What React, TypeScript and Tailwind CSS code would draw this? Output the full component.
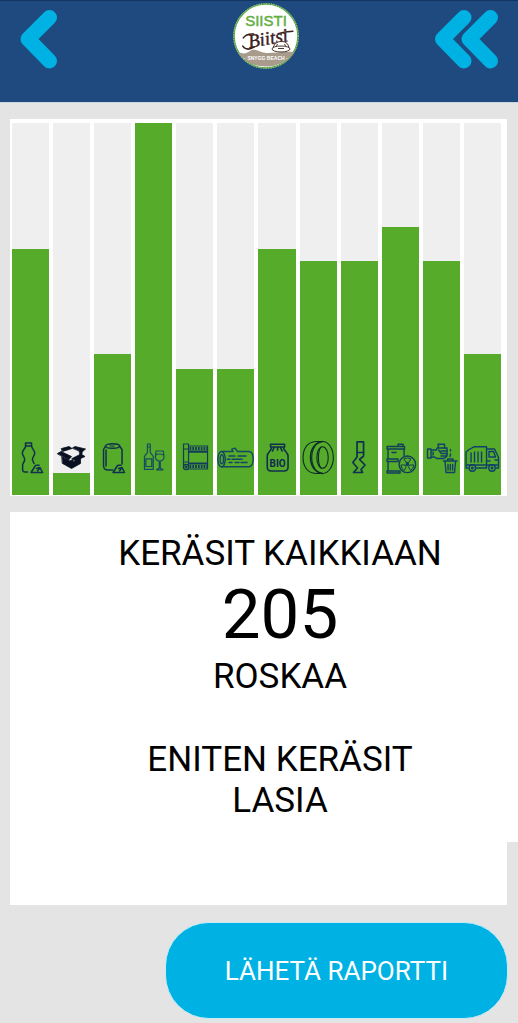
import type { ReactNode } from "react";

type Category = { name: string; level: number; icon: ReactNode };

const WarningTriangle = () => (
  <g>
    <path d="M23.5 25.5 L19 32.5 H30.5 M24.5 25.2 H27" strokeWidth="1.5" />
    <path d="M24.5 28.5 L28 27.5 L30 31.5 M28 27.5 L25.5 31" strokeWidth="1.5" />
  </g>
);

const categories: Category[] = [
  {
    name: "Muovi",
    level: 66,
    icon: (
      <g strokeWidth="1.5">
        <path d="M13.5 3 H19.5 V6 H13.5 Z" />
        <path d="M13.5 6.5 C13 9 10.5 10 10.3 13 C10.3 16 13.2 17 12.6 20 C12 23 10.6 23 10.6 25 V30 Q10.8 32 13 32 H15.5" />
        <path d="M19.7 6.5 C20 9 22.5 10 22.7 13 C22.7 16 20 17 20.4 20 L22 23.5" />
        <WarningTriangle />
      </g>
    ),
  },
  {
    name: "Pahvi",
    level: 6,
    icon: (
      <g fill="#070f20" stroke="#070f20" strokeWidth="0.8">
        <path d="M9 17 L17 21 L19.5 19.5 L20.5 22 L27.5 18 V23.5 L18.5 28.5 L9.5 23.5 Z" />
        <path d="M4.5 13.5 L8 11.5 L18.5 16.5 L15.5 20 Z" />
        <path d="M19 18.5 L28 14 L32 16.5 L22 21 Z" />
        <path d="M8.5 8.5 L16 6.5 L19 8.5 L9.5 11.5 Z" />
        <path d="M19.5 8 L22 6.5 L32.5 9 L29 12 Z" />
        <path d="M26.5 11 L29 11.5 V14 L27 14.5 Z" />
      </g>
    ),
  },
  {
    name: "Metalli",
    level: 38,
    icon: (
      <g strokeWidth="1.5">
        <ellipse cx="18.5" cy="6" rx="7" ry="2.3" />
        <path d="M11.5 6 L9.5 9.5 V26 Q9.8 30 14 30 H18.5 M25.5 6 L28 9.5 V24 M12 10 V26" />
        <path d="M16 6 H20" strokeWidth="1" />
        <WarningTriangle />
      </g>
    ),
  },
  {
    name: "Lasi",
    level: 100,
    icon: (
      <g stroke="#164b62" strokeWidth="1.2">
        <path d="M12.4 4 H15.2 V12 C15.2 14 18.2 14.5 18.2 17 V29.3 H9.4 V17 C9.4 14.5 12.4 14 12.4 12 Z M12.4 7 H15.2 M10.8 18.8 H16.7 V26.5 H10.8 Z" />
        <path d="M21 11 H28.3 L29 17 Q28.5 21 24.7 21 Q20.8 21 20.3 17 Z M20.7 15 Q24 13 28.7 15 M24.2 21 V28 L21.5 29.8 H28 L25.2 28 V21" />
      </g>
    ),
  },
  {
    name: "Filmi",
    level: 34,
    icon: (
      <g stroke="#123c5a" strokeWidth="1.2">
        <path d="M7.5 4 H12.5 V27 M7.5 4 V27 M7.5 9 H12.5 M8.5 22 H12" />
        <circle cx="10" cy="27" r="2.6" />
        <circle cx="10" cy="27" r="0.8" />
        <path d="M12.5 6 H31.5 V29 H12 M12.5 11 H31.5 M13 24 H31.5 M13 12.2 H31.5 V23 H13" />
        <path d="M13.5 8.5 H31 M13.5 26.5 H31" strokeWidth="3.2" strokeDasharray="1.8 1" strokeLinecap="butt" />
      </g>
    ),
  },
  {
    name: "Puu",
    level: 34,
    icon: (
      <g stroke="#144564" strokeWidth="1.4">
        <ellipse cx="4.5" cy="19.2" rx="3.7" ry="7.7" />
        <ellipse cx="4.8" cy="19.2" rx="1.7" ry="4.5" />
        <path d="M4.5 11.5 H16 L14.7 9.2 L18 8.2 L20.5 11.5 H32 C37.5 12 37.5 26 32 26.8 H4.5" />
        <path d="M12 16 H18 M21 16 H29 M10 19.3 H13 M15 19.3 H25 M12 22.5 H15 M18 22.5 H22 M24 22.5 H30" />
      </g>
    ),
  },
  {
    name: "Biojäte",
    level: 66,
    icon: (
      <g strokeWidth="1.6">
        <path d="M12.5 4.2 H26.5 V7 H12.5 Z M13.5 7.5 C13.5 11 9.2 12 9.2 16 V27 Q9.2 31 13 31 H26 Q30 31 30 27 V16 C30 12 25.5 11 25.5 7.5" />
        <path d="M16 7.5 L14.5 11 M19.5 7.5 V10 M22.5 7.5 L24 11" />
        <text x="19.6" y="26.6" textAnchor="middle" fontSize="10" fontWeight="700" fill="#10294f" stroke="none" className="font-[Roboto,sans-serif]">BIO</text>
      </g>
    ),
  },
  {
    name: "Renkaat",
    level: 63,
    icon: (
      <g stroke="#0d2a2b" strokeWidth="1.1">
        <ellipse cx="22.5" cy="17.5" rx="10.8" ry="16" />
        <ellipse cx="22.5" cy="17.5" rx="5.7" ry="10.8" />
        <path d="M22.5 1.5 H16 C7 2 3 9 3 17.5 C3 26 7 33 16 33.5 H22.5" />
        <path d="M22.5 1.5 C14 3 10.5 10 10.5 17.5 C10.5 25 14 32 22.5 33.5" strokeWidth="1.5" />
        <path d="M21 7 C17.5 11 17.5 24 21 28" />
      </g>
    ),
  },
  {
    name: "Tupakka",
    level: 63,
    icon: (
      <g strokeWidth="1.7">
        <path d="M16 1.8 H22.5 V16 L18.5 19.5 L24 25 L20 29.5 L21.5 32.5 H12.5 L16.5 28 L11.8 22.5 L16 17 Z" />
        <path d="M16 12.5 H22.5" />
      </g>
    ),
  },
  {
    name: "Ongelmajäte",
    level: 72,
    icon: (
      <g stroke="#123e59" strokeWidth="1.4">
        <path d="M5 6.5 H22.5 V9 H5 Z M16 6 V4.2 H21 V6 M6 9 V19 M22 9 V15.5 M5 19 H16 V21.5 H5 Z M6 21.5 V31 M5 31 H18 V33 H5 Z M10 12.5 H14" />
        <circle cx="25.3" cy="24.3" r="8.3" />
        <circle cx="25.3" cy="24.3" r="1.1" fill="#123e59" />
        <path d="M23.7 22 L21.8 18.8 Q25.3 17 28.8 18.8 L27 22 Z M22.5 25 H18.8 Q19.3 29 22.2 30.5 L24 27.2 Z M28.1 25 H31.8 Q31.3 29 28.4 30.5 L26.6 27.2 Z" strokeWidth="1" />
      </g>
    ),
  },
  {
    name: "Sekajäte",
    level: 63,
    icon: (
      <g stroke="#124066" strokeWidth="1.4">
        <path d="M4.5 9 H8 V18 H4.5 Z M8 10 H13 L15.5 6.5 L15 4.2 H21.5 V8 H24 V16 L21 18.5 H13.5 L11.5 17 H8" />
        <path d="M15 8 H21.5 M18 11 H24 M18 13.5 H24 M18 16 H23.5 M15.5 10 L17.5 12.5 M10 12 V15" />
        <path d="M27.5 9.5 V11 M27.5 14 L27 16.5" />
        <path d="M20.5 21 H34 M24.5 20.5 V19 H30 V20.5 M22 21.5 L23 32.5 H31.5 L32.5 21.5 M25 24.5 V30 M27.3 24.5 V30 M29.6 24.5 V30" />
      </g>
    ),
  },
  {
    name: "Muu jäte",
    level: 38,
    icon: (
      <g stroke="#10406a" strokeWidth="1.4">
        <path d="M4 28 H2 V12 L5 9.5 L10 6.8 H22.5 V28 H12 M22.5 9 H30.5 L34.5 17.5 V28 H32 M2 25 H34.5" />
        <path d="M25 11.5 H29.5 L31.5 17 H25 Z M22.5 21 H26 M31 20 H34" />
        <path d="M7 13 V22 M10.5 12 V22 M14 12 V22 M17.5 12 V22" />
        <circle cx="8.3" cy="28" r="3.2" />
        <circle cx="28" cy="28" r="3.2" />
        <circle cx="8.3" cy="28" r="0.8" />
        <circle cx="28" cy="28" r="0.8" />
      </g>
    ),
  },
];

function Logo() {
  return (
    <svg viewBox="0 0 66 68" className="ml-10 mt-[1px] h-[68px] w-[66px]" role="img" aria-label="Siisti Biitsi">
      <circle cx="33" cy="34" r="32" fill="#fff" stroke="#58a446" strokeWidth="1.6" />
      <circle cx="33" cy="34" r="32.4" fill="none" stroke="#b7dfa3" strokeWidth="1" strokeDasharray="1 1.5" />
      <path d="M5 50 C10 52 13 52 17 49 C22 45 28 52 35 51 C43 51 50 49 61 50 C55 60 44 64.5 33 64.5 C21 64.5 10 60 5 50 Z" fill="#a99b8c" />
      <text x="33" y="24" textAnchor="middle" fill="#65ae43" stroke="#65ae43" strokeWidth="0.5" fontSize="15" className="font-['Liberation_Sans',sans-serif]">SIISTI</text>
      <g transform="rotate(-10 33 38)">
        <text x="15" y="43" fill="#3b211c" fontSize="19" fontStyle="italic" stroke="#3b211c" strokeWidth="0.4" className="font-['Liberation_Serif',serif]">Biitsi</text>
        <path d="M9 40 Q12 46 20 43 M11 32 Q15 28 22 30 M46 34 Q53 33 61 34" fill="none" stroke="#3b211c" strokeWidth="1.5" strokeLinecap="round" />
      </g>
      <g fill="#fff" stroke="#4d382e" strokeWidth="1">
        <path d="M40 46 Q42 39 49 39.5 Q55 39.5 56 46" />
        <ellipse cx="48" cy="47" rx="9" ry="3" />
        <path d="M43 43.5 L45 42.5 M51 42.5 L53 43.5 M45 46.5 H51" />
      </g>
      <text x="33" y="58" fill="#fff" textAnchor="middle" fontSize="5" fontWeight="700" className="font-['Liberation_Sans',sans-serif]">· SNYGG BEACH ·</text>
    </svg>
  );
}

export default function App() {
  return (
    <div className="min-h-screen overflow-x-hidden bg-[#e4e4e4] pb-1 font-[Roboto,sans-serif] text-black">
      <header className="flex h-[103px] items-start justify-between border-t border-b border-t-[#12365f] border-b-[#c9d5e0] bg-[#1e4a7f] px-5">
        <button type="button" aria-label="Takaisin" className="mt-[9px]">
          <svg viewBox="0 0 37 59" className="h-[59px] w-[37px]" fill="none" stroke="#00b2e3" strokeWidth="15" strokeLinecap="round" strokeLinejoin="round">
            <path d="M29.5 7.5 L8 29 L29.5 51" />
          </svg>
        </button>
        <Logo />
        <button type="button" aria-label="Alkuun" className="mt-[9px]">
          <svg viewBox="0 0 63 59" className="h-[59px] w-[63px]" fill="none" stroke="#00b2e3" strokeWidth="15" strokeLinecap="round" strokeLinejoin="round">
            <path d="M29 7.5 L7.5 29 L29 51" />
            <path d="M55.5 7.5 L34 29 L55.5 51" stroke="#1e4a7f" strokeWidth="19" />
            <path d="M55.5 7.5 L34 29 L55.5 51" />
          </svg>
        </button>
      </header>

      <main className="pt-4 pl-[10px]">
        <ul className="mr-[11px] grid grid-cols-12 gap-1 bg-white pt-1 pr-[6px] pb-px pl-[2px]">
          {categories.map((c) => (
            <li key={c.name} aria-label={c.name} className="grid h-[372px] items-end bg-[#efefef]">
              <div className="col-start-1 row-start-1 bg-[#56ab2a]" style={{ height: `${c.level}%` }} />
              <svg viewBox="0 0 37 36" className="col-start-1 row-start-1 mb-[19px] h-9 w-full overflow-visible" fill="none" stroke="#10304f" strokeLinecap="round" strokeLinejoin="round" aria-hidden="true">
                {c.icon}
              </svg>
            </li>
          ))}
        </ul>

        <section className="mt-4 bg-white py-[21px] pl-8 text-center text-[35px] leading-[41px]">
          <p>KERÄSIT KAIKKIAAN</p>
          <p className="text-[69px] leading-[82px]">205</p>
          <p>ROSKAA</p>
          <p className="mt-[42px]">ENITEN KERÄSIT</p>
          <p>LASIA</p>
        </section>
        <div className="mr-[11px] h-[63px] bg-white" />

        <div className="mt-[17px] mr-[10px] flex justify-end">
          <button type="button" className="h-[97px] rounded-[44px] border border-[#c5edf7] bg-[#00b2e3] px-[59px] text-[26px] leading-8 text-white">
            LÄHETÄ RAPORTTI
          </button>
        </div>
      </main>
    </div>
  );
}
